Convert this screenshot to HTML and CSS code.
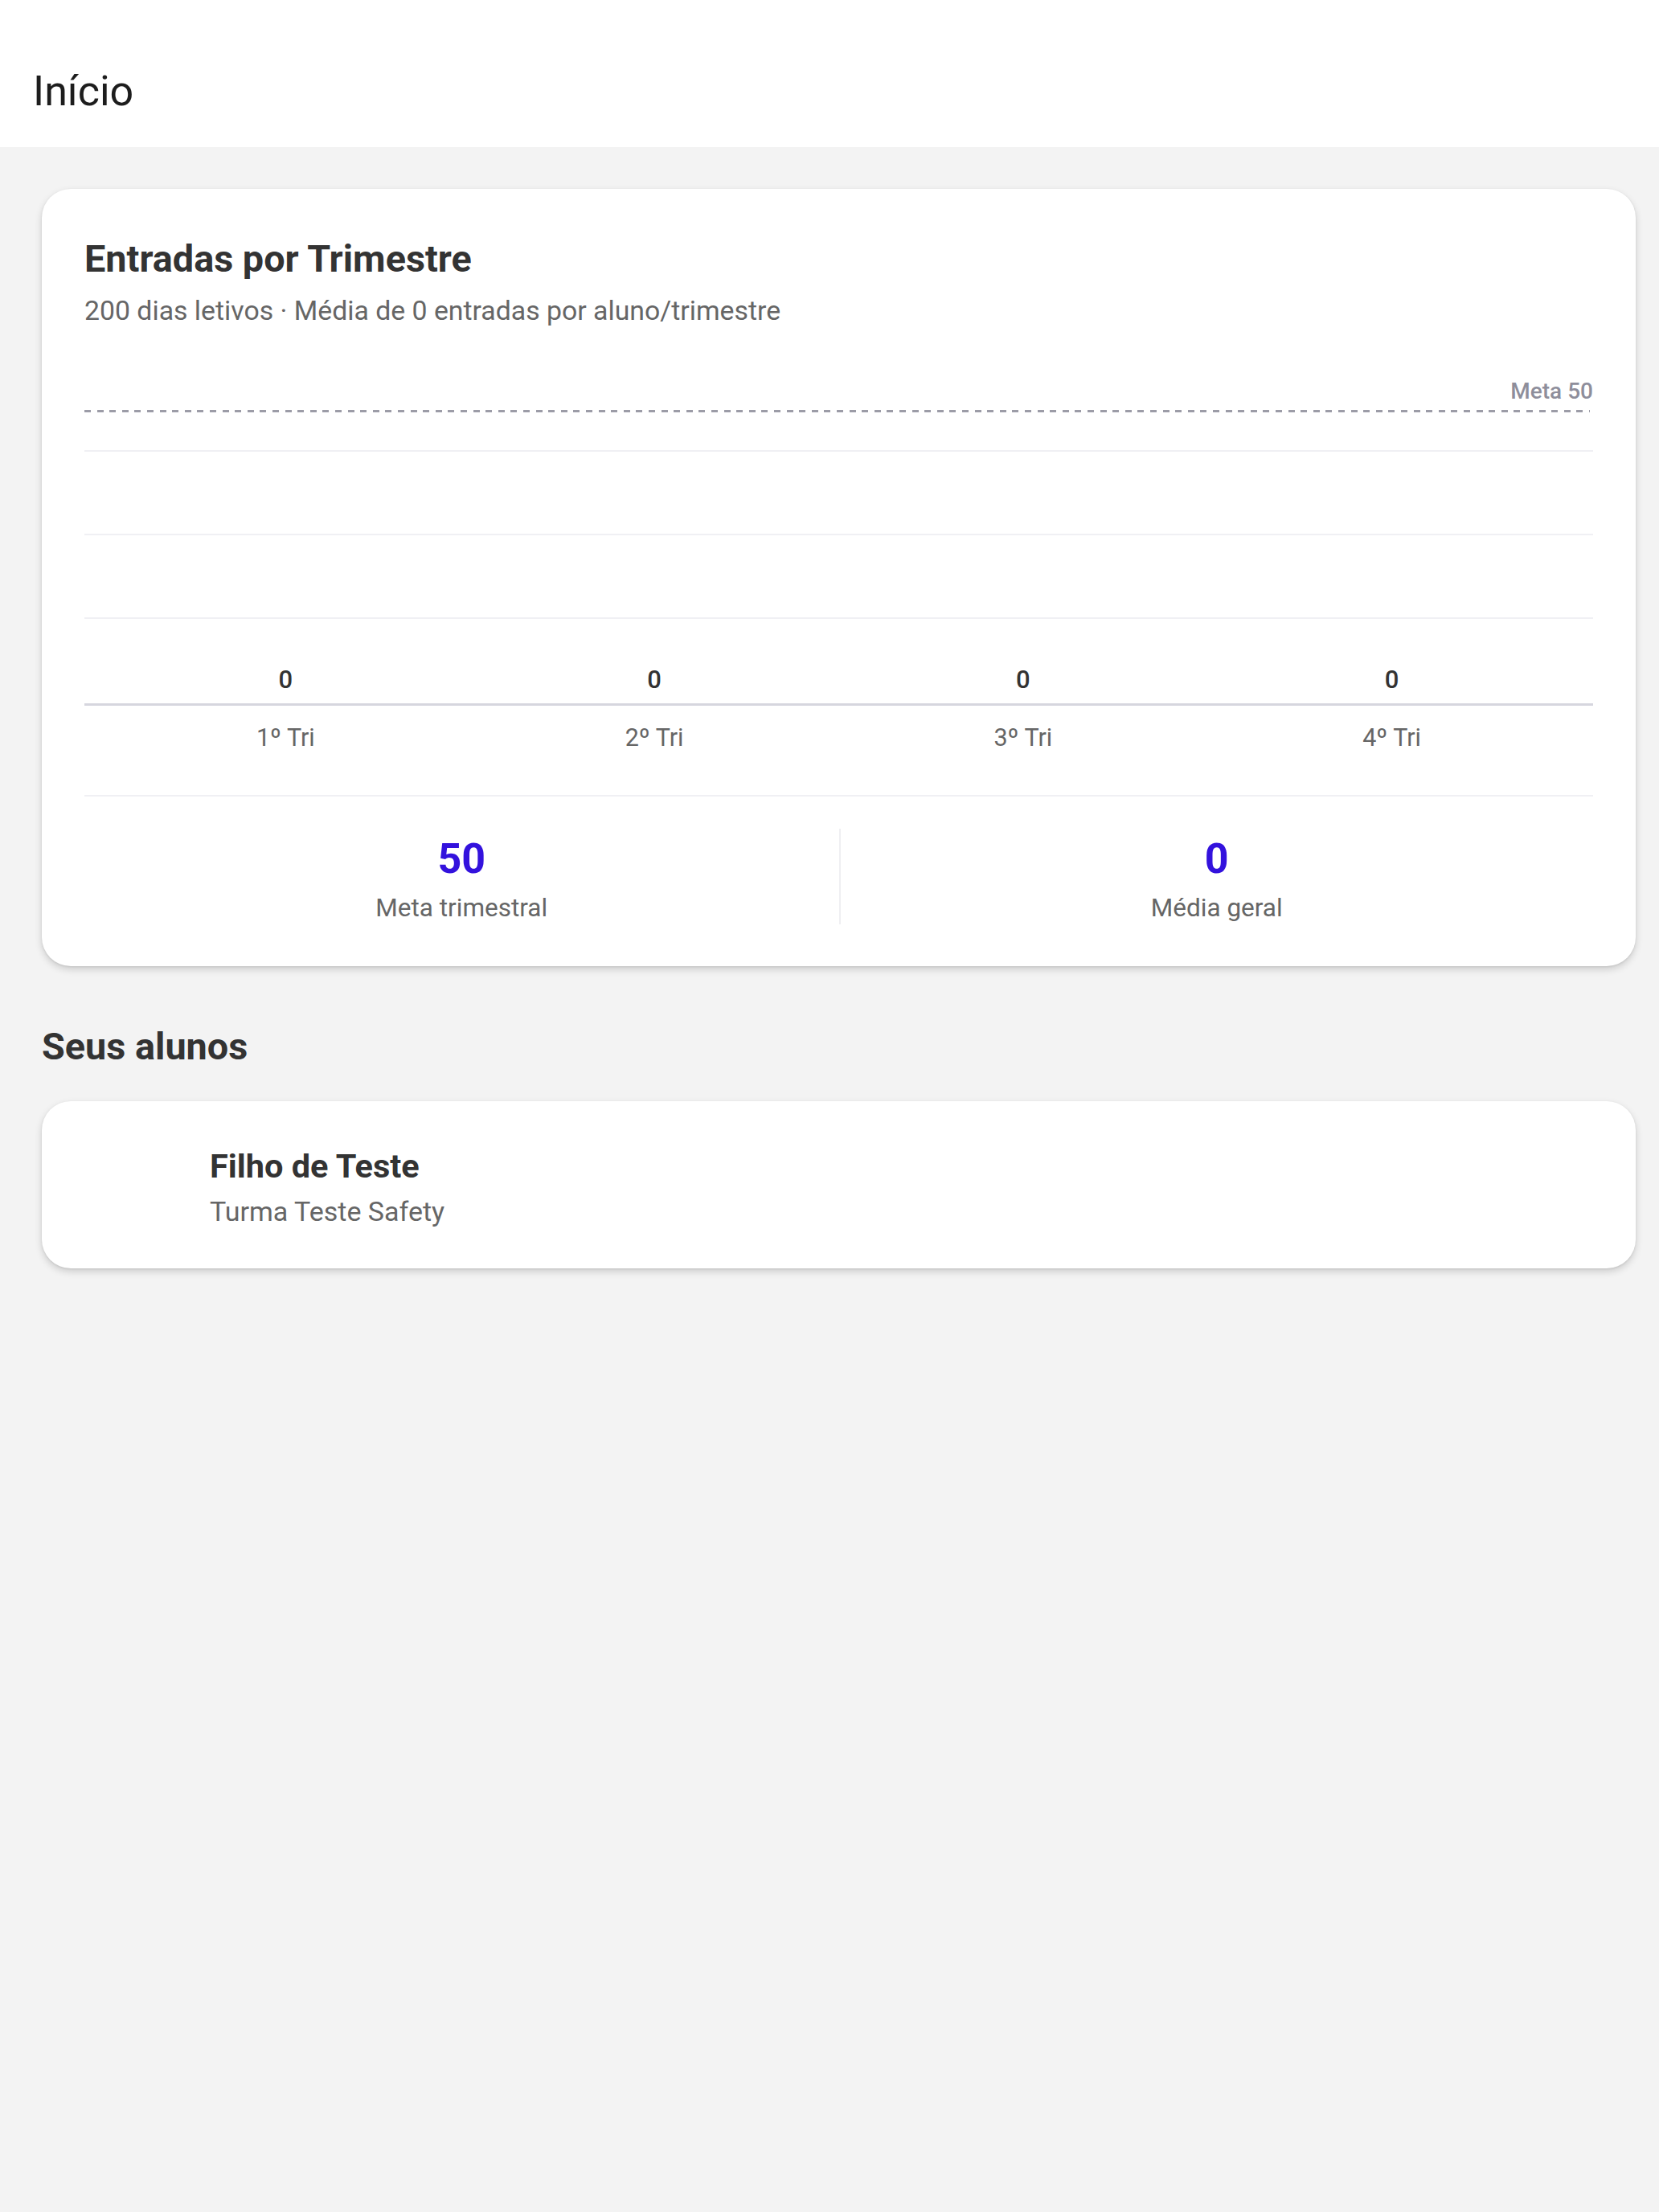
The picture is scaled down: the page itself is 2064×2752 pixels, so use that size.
FILE: index.html
```html
<!DOCTYPE html>
<html lang="pt-BR">
<head>
<meta charset="utf-8">
<title>Início</title>
<link rel="stylesheet" href="styles.css">
</head>
<body>
<header class="topbar">
  <h1 class="topbar-title">Início</h1>
</header>
<main class="content">
  <section class="card chart-card">
    <h2 class="card-title">Entradas por Trimestre</h2>
    <p class="card-subtitle">200 dias letivos · Média de 0 entradas por aluno/trimestre</p>
    <div class="chart">
      <div class="goal-label">Meta 50</div>
      <div class="goal-line"></div>
      <div class="grid-line first"></div>
      <div class="grid-line"></div>
      <div class="grid-line"></div>
      <div class="bars">
        <div class="bar-col"><span class="bar-value">0</span><div class="bar"></div></div>
        <div class="bar-col"><span class="bar-value">0</span><div class="bar"></div></div>
        <div class="bar-col"><span class="bar-value">0</span><div class="bar"></div></div>
        <div class="bar-col"><span class="bar-value">0</span><div class="bar"></div></div>
      </div>
      <div class="axis"></div>
      <div class="labels">
        <span class="label">1º Tri</span>
        <span class="label">2º Tri</span>
        <span class="label">3º Tri</span>
        <span class="label">4º Tri</span>
      </div>
    </div>
    <div class="stats">
      <div class="stat">
        <div class="stat-value">50</div>
        <div class="stat-label">Meta trimestral</div>
      </div>
      <div class="stat divided">
        <div class="stat-value">0</div>
        <div class="stat-label">Média geral</div>
      </div>
    </div>
  </section>

  <h2 class="section-title">Seus alunos</h2>

  <section class="card student-card">
    <div class="avatar"></div>
    <div class="student-info">
      <div class="student-name">Filho de Teste</div>
      <div class="student-class">Turma Teste Safety</div>
    </div>
  </section>
</main>
</body>
</html>
```

FILE: styles.css
```css
* { box-sizing: border-box; }

html, body {
  margin: 0;
  padding: 0;
}

body {
  width: 2064px;
  min-height: 2752px;
  background: #f3f3f3;
  font-family: Roboto, "Noto Sans", "Liberation Sans", sans-serif;
  color: #333333;
}

.topbar {
  height: 183px;
  background: #ffffff;
  padding: 84px 41px 0 41px;
}

.topbar-title {
  margin: 0;
  font-size: 52px;
  line-height: 60px;
  font-weight: 400;
  color: #1d1d1d;
}

.content {
  padding: 52px 29px 0 52px;
}

.card {
  background: #ffffff;
  border-radius: 36px;
  box-shadow: 0 4px 10px rgba(0, 0, 0, 0.16), 0 1px 3px rgba(0, 0, 0, 0.08);
}

.chart-card {
  padding: 60px 53px 52px 53px;
}

.card-title {
  margin: 0;
  font-size: 46.8px;
  line-height: 54px;
  font-weight: 700;
  color: #333333;
}

.card-subtitle {
  margin: 18px 0 0 0;
  font-size: 33.8px;
  line-height: 40px;
  color: #666666;
}

.chart {
  margin-top: 64px;
}

.goal-label {
  text-align: right;
  font-size: 28px;
  line-height: 32px;
  font-weight: 500;
  color: #8e8e9b;
}

.goal-line {
  margin-top: 6.5px;
  height: 3px;
  background: repeating-linear-gradient(to right, #9c9ca7 0 8px, transparent 8px 15.6px);
  margin-right: 4px;
}

.grid-line {
  height: 2px;
  background: #f0f0f4;
  margin-top: 102px;
}

.grid-line.first {
  margin-top: 47px;
}

.bars {
  height: 105px;
  display: grid;
  grid-template-columns: repeat(4, 1fr);
  padding: 0 21px;
  align-items: end;
}

.bar-col {
  display: flex;
  flex-direction: column;
  align-items: center;
}

.bar-value {
  font-size: 31px;
  line-height: 36px;
  font-weight: 500;
  color: #333333;
  margin-bottom: 11px;
}

.bar {
  width: 120px;
  height: 0;
}

.axis {
  height: 3px;
  background: #d6d6de;
}

.labels {
  display: grid;
  grid-template-columns: repeat(4, 1fr);
  padding: 0 21px;
  margin-top: 20.5px;
  padding-bottom: 50.5px;
  border-bottom: 2px solid #f0f0f4;
}

.label {
  text-align: center;
  font-size: 30.5px;
  line-height: 40px;
  color: #666666;
}

.stats {
  display: grid;
  grid-template-columns: 1fr 1fr;
  margin-top: 40px;
}

.stat {
  padding-top: 7px;
  text-align: center;
}

.stat.divided {
  border-left: 2px solid #efeff2;
}

.stat-value {
  font-size: 52px;
  line-height: 62px;
  font-weight: 700;
  color: #3312dd;
}

.stat-label {
  margin-top: 10.5px;
  font-size: 31.5px;
  line-height: 40px;
  color: #666666;
}

.section-title {
  margin: 72.5px 0 41px 0;
  font-size: 46.8px;
  line-height: 54px;
  font-weight: 700;
  color: #333333;
}

.student-card {
  display: flex;
  align-items: flex-start;
  gap: 44px;
  height: 208px;
  padding: 57px 53px 0 53px;
}

.avatar {
  width: 112px;
  height: 0;
  flex: none;
}

.student-name {
  font-size: 41.5px;
  line-height: 48px;
  font-weight: 700;
  color: #333333;
}

.student-class {
  margin-top: 12.5px;
  font-size: 34px;
  line-height: 40px;
  color: #666666;
}
```
